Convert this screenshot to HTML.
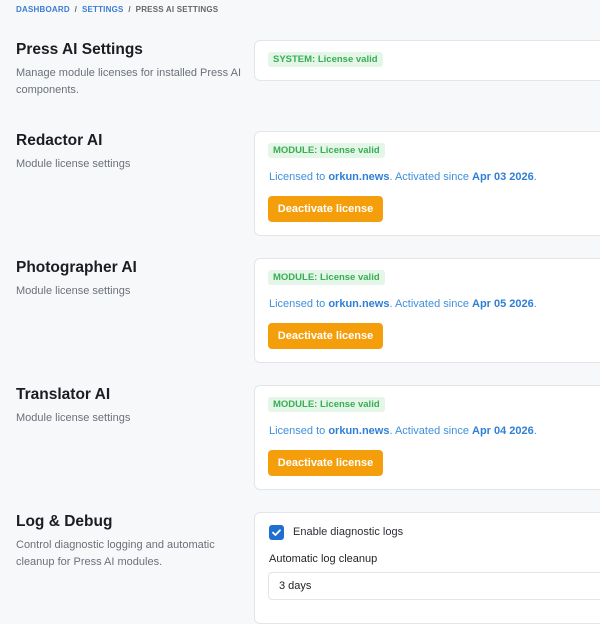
<!DOCTYPE html>
<html><head><style>
body{margin:0;width:600px;height:600px;overflow:hidden;background:#f7f8fa;font-family:"Liberation Sans",sans-serif;position:relative}
.a{position:absolute;white-space:nowrap}
.bc{top:5px;left:16px;font-size:8px;font-weight:bold;letter-spacing:.2px;color:#666}
.bc b{color:#3b7dd0}
h2{position:absolute;left:16px;margin:0;font-size:15.5px;font-weight:bold;color:#1b1d22}
.sub{position:absolute;left:16px;font-size:11px;color:#6b7079;line-height:17px;width:230px}
.card{position:absolute;left:254px;width:400px;background:#fff;border:1px solid #e3e5e9;border-radius:6px}
.badge{position:absolute;left:13px;height:15px;line-height:15px;padding:0 5px;background:#e4f6e8;color:#39ad55;font-size:9.5px;font-weight:bold;border-radius:3px}
.lic{position:absolute;left:14px;font-size:11px;color:#3f8fdd}
.lic b{color:#2f7fd6}
.btn{position:absolute;left:13px;width:115px;height:26px;line-height:26px;background:#f59e0b;color:#fff;font-size:11px;font-weight:bold;text-align:center;border-radius:4px}
</style></head><body>
<div class="a bc"><b>DASHBOARD</b> &nbsp;/&nbsp; <b>SETTINGS</b> &nbsp;/&nbsp; PRESS AI SETTINGS</div>

<h2 style="top:41px">Press AI Settings</h2>
<div class="sub" style="top:65px">Manage module licenses for installed Press AI components.</div>
<div class="card" style="top:40px;height:39px"><div class="badge" style="top:11px">SYSTEM: License valid</div></div>

<h2 style="top:132px">Redactor AI</h2>
<div class="sub" style="top:156px">Module license settings</div>
<div class="card" style="top:131px;height:103px">
<div class="badge" style="top:11px">MODULE: License valid</div>
<div class="lic a" style="top:39px">Licensed to <b>orkun.news</b>. Activated since <b>Apr 03 2026</b>.</div>
<div class="btn" style="top:64px">Deactivate license</div></div>

<h2 style="top:259px">Photographer AI</h2>
<div class="sub" style="top:283px">Module license settings</div>
<div class="card" style="top:258px;height:103px">
<div class="badge" style="top:11px">MODULE: License valid</div>
<div class="lic a" style="top:39px">Licensed to <b>orkun.news</b>. Activated since <b>Apr 05 2026</b>.</div>
<div class="btn" style="top:64px">Deactivate license</div></div>

<h2 style="top:386px">Translator AI</h2>
<div class="sub" style="top:410px">Module license settings</div>
<div class="card" style="top:385px;height:103px">
<div class="badge" style="top:11px">MODULE: License valid</div>
<div class="lic a" style="top:39px">Licensed to <b>orkun.news</b>. Activated since <b>Apr 04 2026</b>.</div>
<div class="btn" style="top:64px">Deactivate license</div></div>

<h2 style="top:513px">Log &amp; Debug</h2>
<div class="sub" style="top:537px">Control diagnostic logging and automatic cleanup for Press AI modules.</div>
<div class="card" style="top:512px;height:110px">
<div class="a" style="left:14px;top:12px;width:15px;height:15px;background:#1f6fd1;border-radius:3px"><svg width="15" height="15" viewBox="0 0 15 15"><path d="M4 7.6l2.4 2.4L11 5.3" fill="none" stroke="#fff" stroke-width="1.8" stroke-linecap="round" stroke-linejoin="round"/></svg></div>
<div class="a" style="left:38px;top:13px;font-size:11px;color:#2a2d33">Enable diagnostic logs</div>
<div class="a" style="left:14px;top:40px;font-size:11px;color:#1f2227">Automatic log cleanup</div>
<div class="a" style="left:13px;top:59px;width:400px;height:26px;border:1px solid #e3e5e9;border-radius:4px;font-size:11px;color:#222;line-height:26px;text-indent:10px">3 days</div>
</div>
</body></html>
